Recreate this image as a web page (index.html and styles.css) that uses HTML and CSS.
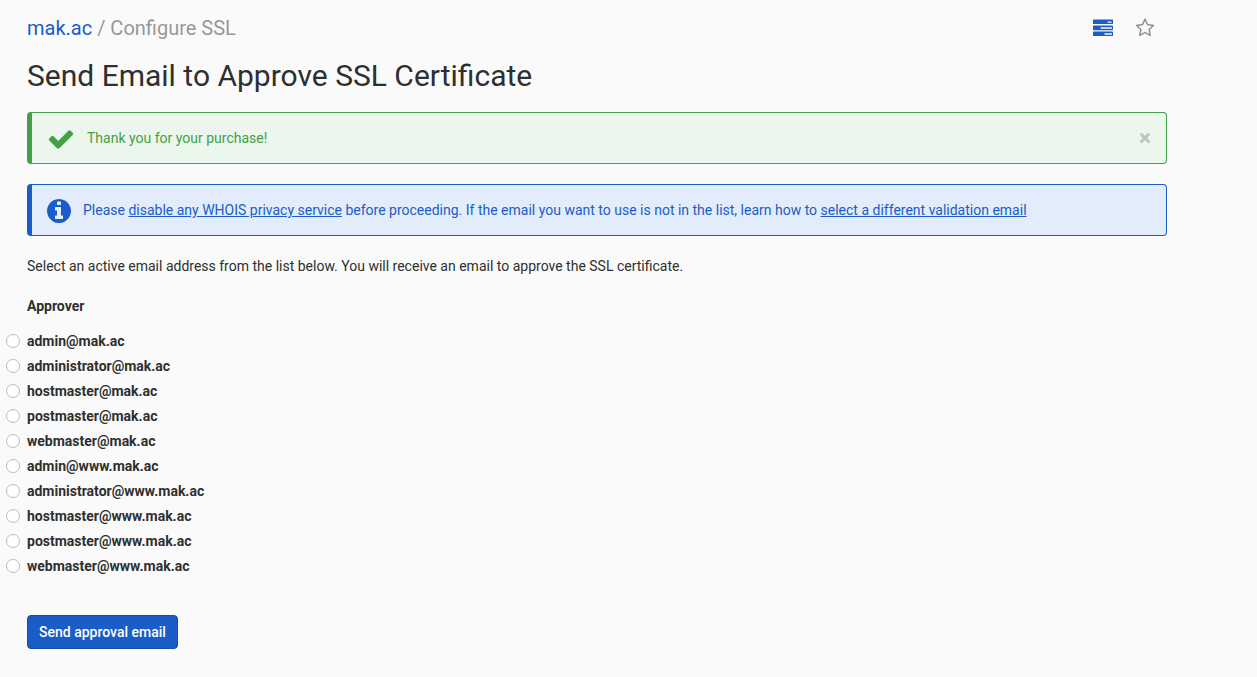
FILE: index.html
```html
<!DOCTYPE html>
<html lang="en">
<head>
<meta charset="utf-8">
<meta name="viewport" content="width=device-width, initial-scale=1">
<title>Send Email to Approve SSL Certificate</title>
<link rel="stylesheet" href="styles.css">
</head>
<body>
<main class="page">
  <header class="topbar">
    <nav class="breadcrumb" aria-label="Breadcrumb"><a href="#domain">mak.ac</a> / Configure SSL</nav>
    <div class="tools">
      <button class="icon-button tool-tasks" type="button" aria-label="Tasks"><svg viewBox="0 0 20 20"><path fill-rule="evenodd" d="M.7 1.500h18.600a.7.7 0 0 1 .7.7v3.200a.7.7 0 0 1-.7.7H.7a.7.7 0 0 1-.7-.7V2.200a.7.7 0 0 1 .7-.7zM14.500 3.400v1.400h4V3.400zM.7 7.600h18.600a.7.7 0 0 1 .7.7v3.200a.7.7 0 0 1-.7.7H.7a.7.7 0 0 1-.7-.7V8.300a.7.7 0 0 1 .7-.7zM7.500 9.300v1.500h11.500V9.300zM.7 13.500h18.600a.7.7 0 0 1 .7.7v3.200a.7.7 0 0 1-.7.7H.7a.7.7 0 0 1-.7-.7v-3.200a.7.7 0 0 1 .7-.7zM11.500 15.200v1.500h7.500v-1.500z"/></svg></button>
      <button class="icon-button tool-star" type="button" aria-label="Add to favorites"><svg viewBox="0 0 1792 1792"><path d="M1201 1004l306-297-422-62-189-382-189 382-422 62 306 297-73 421 378-199 377 199zm527-357q0 22-26 48l-363 354 86 500q1 7 1 20 0 50-41 50-19 0-40-12l-449-236-449 236q-22 12-40 12-21 0-31.500-14.500t-10.500-35.500q0-6 2-20l86-500-364-354q-25-27-25-48 0-37 56-46l502-73 225-455q19-41 49-41t49 41l225 455 502 73q56 9 56 46z"/></svg></button>
    </div>
  </header>

  <h1 class="title">Send Email to Approve SSL Certificate</h1>

  <div class="alert alert-success" role="status">
    <svg class="alert-icon" viewBox="0 0 1792 1792" aria-hidden="true"><path d="M1671 566q0 40-28 68l-724 724-136 136q-28 28-68 28t-68-28l-136-136-362-362q-28-28-28-68t28-68l136-136q28-28 68-28t68 28l294 295 656-657q28-28 68-28t68 28l136 136q28 28 28 68z"/></svg>
    <p class="alert-text">Thank you for your purchase!</p>
    <button class="icon-button alert-close" type="button" aria-label="Close"><svg viewBox="0 0 16 16"><path d="M4.500 4.500l7 7M11.500 4.500l-7 7"/></svg></button>
  </div>

  <div class="alert alert-info" role="note">
    <svg class="alert-icon" viewBox="128 128 1536 1536" aria-hidden="true"><path d="M1152 1376v-160q0-14-9-23t-23-9h-96v-512q0-14-9-23t-23-9h-320q-14 0-23 9t-9 23v160q0 14 9 23t23 9h96v320h-96q-14 0-23 9t-9 23v160q0 14 9 23t23 9h448q14 0 23-9t9-23zm-128-896v-160q0-14-9-23t-23-9h-192q-14 0-23 9t-9 23v160q0 14 9 23t23 9h192q14 0 23-9t9-23zm640 416q0 209-103 385.500t-279.500 279.500-385.500 103-385.500-103-279.500-279.500-103-385.500 103-385.500 279.500-279.500 385.500-103 385.500 103 279.500 279.500 103 385.500z"/></svg>
    <p class="alert-text">Please <a href="#whois">disable any WHOIS privacy service</a> before proceeding. If the email you want to use is not in the list, learn how to <a href="#validation">select a different validation email</a></p>
  </div>

  <p class="intro">Select an active email address from the list below. You will receive an email to approve the SSL certificate.</p>

  <form class="form">
    <fieldset class="approvers">
      <legend>Approver</legend>
      <label class="option"><input type="radio" name="approver"><span>admin@mak.ac</span></label>
      <label class="option"><input type="radio" name="approver"><span>administrator@mak.ac</span></label>
      <label class="option"><input type="radio" name="approver"><span>hostmaster@mak.ac</span></label>
      <label class="option"><input type="radio" name="approver"><span>postmaster@mak.ac</span></label>
      <label class="option"><input type="radio" name="approver"><span>webmaster@mak.ac</span></label>
      <label class="option"><input type="radio" name="approver"><span>admin@www.mak.ac</span></label>
      <label class="option"><input type="radio" name="approver"><span>administrator@www.mak.ac</span></label>
      <label class="option"><input type="radio" name="approver"><span>hostmaster@www.mak.ac</span></label>
      <label class="option"><input type="radio" name="approver"><span>postmaster@www.mak.ac</span></label>
      <label class="option"><input type="radio" name="approver"><span>webmaster@www.mak.ac</span></label>
    </fieldset>
    <button class="submit" type="button">Send approval email</button>
  </form>
</main>
</body>
</html>
```

FILE: styles.css
```css
* {
  box-sizing: border-box;
}

body {
  margin: 0;
  background: #fafafa;
  color: #2e2f2f;
  font: 14px/20px Roboto, "Liberation Sans", sans-serif;
}

h1,
p {
  margin: 0;
}

svg {
  display: block;
  fill: currentColor;
}

.page {
  max-width: 1194px;
  padding: 16px 27px 28px;
}

.topbar {
  display: flex;
  align-items: center;
  justify-content: space-between;
  padding-right: 12px;
}

.breadcrumb {
  color: #979797;
  font-size: 20px;
  line-height: 24px;
}

.breadcrumb a {
  color: #1a5dc8;
  text-decoration: none;
}

.tools {
  display: flex;
  align-items: center;
  gap: 22px;
}

.icon-button {
  padding: 0;
  border: 0;
  background: none;
  cursor: pointer;
}

.icon-button svg {
  width: 20px;
  height: 20px;
}

.tool-tasks {
  color: #1a5dc8;
}

.tool-star {
  color: #8c8c8c;
}

.title {
  margin: 18px 0;
  font-size: 30px;
  font-weight: 400;
  line-height: 36px;
}

.alert {
  display: flex;
  align-items: center;
  min-height: 52px;
  margin-bottom: 20px;
  padding: 8px 13px 8px 15px;
  border: 1px solid;
  border-left-width: 5px;
  border-radius: 4px;
}

.alert-success {
  border-color: #43a047;
  background: #ebf6ec;
  color: #43a047;
}

.alert-info {
  border-color: #1a5dc8;
  background: #e3ecfb;
  color: #1a5dc8;
}

.alert-icon {
  flex: none;
  width: 24px;
  height: 24px;
  margin: 2px 12px 0 0;
}

.alert-success .alert-icon {
  width: 28px;
  height: 28px;
}

.alert-text {
  flex: 1;
}

.alert-text a {
  color: inherit;
}

.alert-close {
  color: #bdc3bd;
}

.alert-close svg {
  width: 16px;
  height: 16px;
  stroke: currentColor;
  stroke-width: 3;
  stroke-linecap: round;
}

.intro {
  margin-bottom: 20px;
}

.approvers {
  min-width: 0;
  margin: 0 0 37px;
  padding: 0;
  border: 0;
  font-weight: 700;
}

.approvers legend {
  margin-bottom: 12px;
  padding: 0;
}

/* Radios hang in the left page margin so the labels line up with the text */
.option {
  display: flex;
  align-items: center;
  gap: 7px;
  width: fit-content;
  height: 25px;
  margin-left: -21px;
}

.option input {
  appearance: none;
  width: 14px;
  height: 14px;
  margin: 0;
  border: 1px solid #bdbdbd;
  border-radius: 50%;
  background: #fff;
}

.option input:checked {
  border: 4px solid #1a5dc8;
}

.submit {
  padding: 6px 11px;
  border: 1px solid #164ea8;
  border-radius: 4px;
  background: #1a5dc8;
  color: #fff;
  font: 500 14px/20px Roboto, "Liberation Sans", sans-serif;
  cursor: pointer;
}
```
